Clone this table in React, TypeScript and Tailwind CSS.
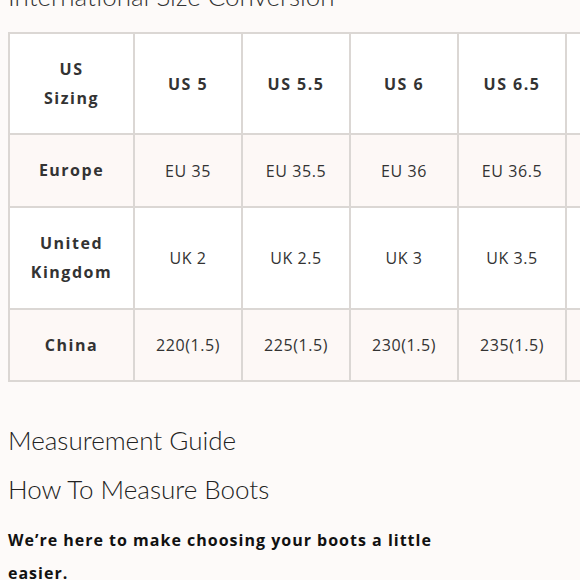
import React from "react";

const cols = ["US 5", "US 5.5", "US 6", "US 6.5", "US 7"];
const rows: { label: string[]; vals: string[]; bg: string; h: string }[] = [
  { label: ["Europe"], vals: ["EU 35", "EU 35.5", "EU 36", "EU 36.5", "EU 37"], bg: "bg-[#fdf8f6]", h: "h-[73px]" },
  { label: ["United", "Kingdom"], vals: ["UK 2", "UK 2.5", "UK 3", "UK 3.5", "UK 4"], bg: "bg-white", h: "h-[102px]" },
  { label: ["China"], vals: ["220(1.5)", "225(1.5)", "230(1.5)", "235(1.5)", "240(1.5)"], bg: "bg-[#fdf8f6]", h: "h-[72px]" },
];

export default function App() {
  return (
    <div className="w-[580px] h-[580px] overflow-hidden bg-[#fdfaf9] text-[#222]" style={{ fontFamily: "'Open Sans', sans-serif" }}>
      <div className="pl-[8px]">
        <h2 className="-mt-[24px] h-[56px] text-[26px] leading-[40px] font-light text-[#333] whitespace-nowrap" style={{ fontFamily: "Lato, sans-serif" }}>
          International Size Conversion
        </h2>
        <table className="border-collapse table-fixed w-[665px] text-[16px] text-[#333]">
          <colgroup>
            <col className="w-[125px]" />
            <col className="w-[108px]" />
            <col className="w-[108px]" />
            <col className="w-[108px]" />
            <col className="w-[108px]" />
            <col className="w-[108px]" />
          </colgroup>
          <tbody>
            <tr className="h-[101px] bg-white">
              <td className="border-2 border-[#dbd7d4] text-center font-bold tracking-[1.5px] leading-[29px]">
                US<br />Sizing
              </td>
              {cols.map((c) => (
                <td key={c} className="border-2 border-[#dbd7d4] text-center font-bold tracking-[1.5px]">
                  {c}
                </td>
              ))}
            </tr>
            {rows.map((r) => (
              <tr key={r.label[0]} className={`${r.bg} ${r.h}`}>
                <td className="border-2 border-[#dbd7d4] text-center font-bold tracking-[1.5px] leading-[29px]">
                  {r.label.map((l, i) => (
                    <div key={i}>{l}</div>
                  ))}
                </td>
                {r.vals.map((v) => (
                  <td key={v} className="border-2 border-[#dbd7d4] text-center tracking-[0.6px]">
                    {v}
                  </td>
                ))}
              </tr>
            ))}
          </tbody>
        </table>
        <h3 className="mt-[40px] text-[26px] leading-[36px] font-light text-[#222]" style={{ fontFamily: "Lato, sans-serif" }}>
          Measurement Guide
        </h3>
        <h3 className="mt-[13px] text-[26px] leading-[36px] font-light text-[#222]" style={{ fontFamily: "Lato, sans-serif" }}>
          How To Measure Boots
        </h3>
        <p className="mt-[17px] w-[440px] text-[16px] leading-[33px] font-bold tracking-[1px] text-[#111]">
          We’re here to make choosing your boots a little easier.
        </p>
      </div>
    </div>
  );
}
